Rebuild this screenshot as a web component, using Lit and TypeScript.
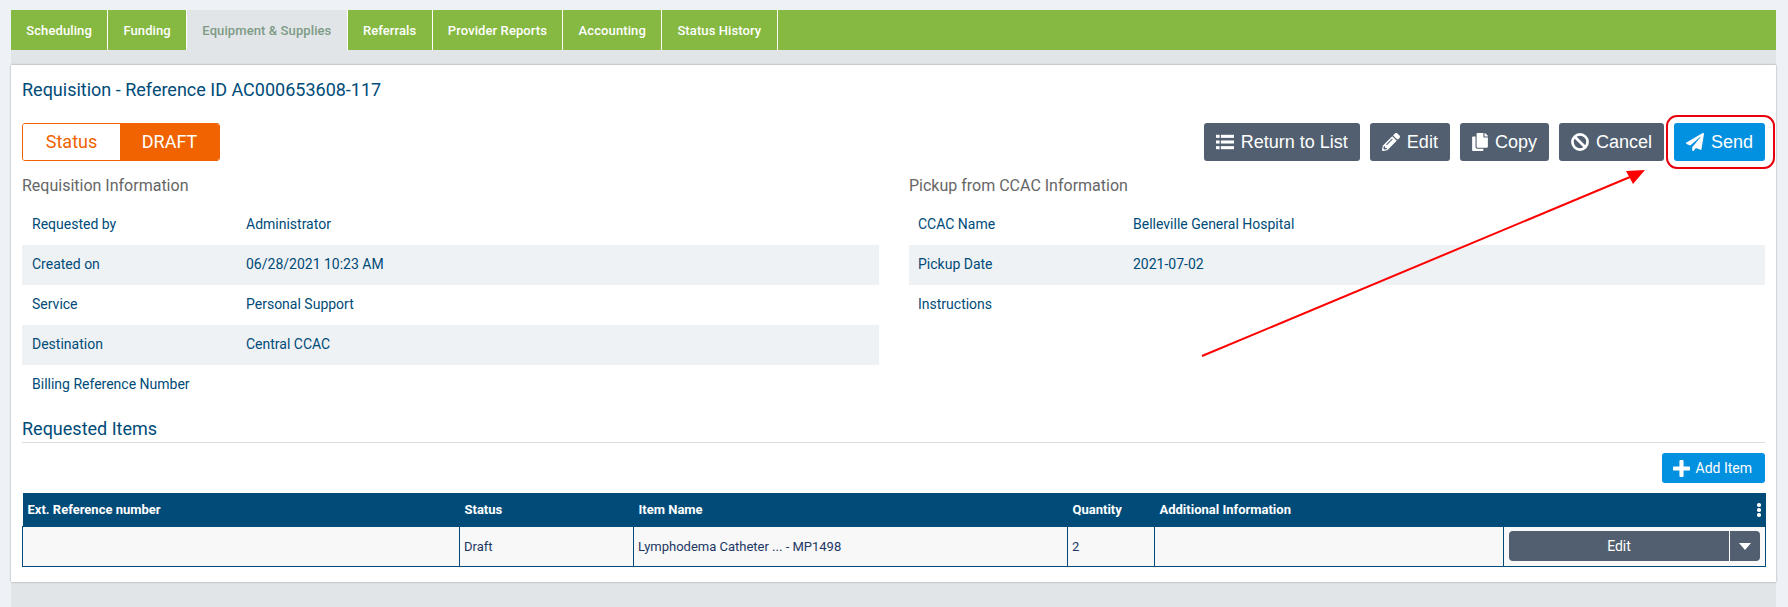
import { LitElement, html, css, svg } from "lit";
import { customElement } from "lit/decorators.js";

const ICONS = {
  list: svg`<svg class="ic" viewBox="0 0 20 18"><rect x="0" y="1" width="4" height="3.4"/><rect x="5.4" y="1" width="14.6" height="3.4"/><rect x="0" y="7.3" width="4" height="3.4"/><rect x="5.4" y="7.3" width="14.6" height="3.4"/><rect x="0" y="13.6" width="4" height="3.4"/><rect x="5.4" y="13.6" width="14.6" height="3.4"/></svg>`,
  pencil: svg`<svg class="ic" viewBox="0 0 512 512"><path d="M497.9 142.1l-46.1 46.1c-4.7 4.7-12.3 4.7-17 0l-111-111c-4.7-4.7-4.7-12.3 0-17l46.1-46.1c18.7-18.7 49.1-18.7 67.9 0l60.1 60.1c18.8 18.7 18.8 49.1 0 67.9zM284.2 99.8L21.6 362.4.4 483.9c-2.9 16.4 11.4 30.6 27.8 27.8l121.5-21.3 262.6-262.6c4.7-4.7 4.7-12.3 0-17l-111-111c-4.8-4.7-12.4-4.7-17.1 0zM124.1 339.9c-5.5-5.5-5.5-14.3 0-19.8l154-154c5.5-5.5 14.3-5.5 19.8 0s5.5 14.3 0 19.8l-154 154c-5.5 5.5-14.3 5.5-19.8 0zM88 424h48v36.3l-64.5 11.3-31.1-31.1L51.7 376H88v48z"/></svg>`,
  copy: svg`<svg class="ic narrow" viewBox="0 0 448 512"><path d="M320 448v40c0 13.255-10.745 24-24 24H24c-13.255 0-24-10.745-24-24V120c0-13.255 10.745-24 24-24h72v296c0 30.879 25.121 56 56 56h168zm0-344V0H152c-13.255 0-24 10.745-24 24v368c0 13.255 10.745 24 24 24h272c13.255 0 24-10.745 24-24V128H344c-13.2 0-24-10.8-24-24zm120.971-31.029L375.029 7.029A24 24 0 0 0 358.059 0H352v96h96v-6.059a24 24 0 0 0-7.029-16.97z"/></svg>`,
  ban: svg`<svg class="ic" viewBox="0 0 20 20"><circle cx="10" cy="10" r="8.4" fill="none" stroke="#fff" stroke-width="3"/><path d="M4.4 4.4 15.6 15.6" stroke="#fff" stroke-width="3"/></svg>`,
  send: svg`<svg class="ic" viewBox="0 0 512 512"><path d="M476 3.2L12.5 270.6c-18.1 10.4-15.8 35.6 2.2 43.2L121 358.4l287.3-253.2c5.5-4.9 13.3 2.6 8.6 8.3L176 407v80.5c0 23.6 28.5 32.9 42.5 15.8L282 426l124.6 52.2c14.2 6 30.4-2.9 33-18.2l72-432C515 7.8 493.3-6.8 476 3.2z"/></svg>`,
  plus: svg`<svg class="ic-plus" viewBox="0 0 18 18"><rect x="6.8" y="0" width="4.4" height="18" rx="1"/><rect x="0" y="6.8" width="18" height="4.4" rx="1"/></svg>`,
};

const TABS = ["Scheduling", "Funding", "Equipment & Supplies", "Referrals", "Provider Reports", "Accounting", "Status History"];
const LEFT: [string, string][] = [
  ["Requested by", "Administrator"],
  ["Created on", "06/28/2021 10:23 AM"],
  ["Service", "Personal Support"],
  ["Destination", "Central CCAC"],
  ["Billing Reference Number", ""],
];
const RIGHT: [string, string][] = [
  ["CCAC Name", "Belleville General Hospital"],
  ["Pickup Date", "2021-07-02"],
  ["Instructions", ""],
];

@customElement("app-root")
export class AppRoot extends LitElement {
  static styles = css`
    :host { display: block; position: relative; background: #eef1f5; height: 607px; overflow: hidden; font-family: Roboto, sans-serif; color: #004b78; }
    .page { margin: 0 12px 0 11px; padding-top: 10px; height: 597px; }
    .inner { background: #e1e5e8; height: 597px; }
    .tabs { display: flex; height: 40px; background: #85b941; }
    .tab { display: flex; align-items: center; padding: 0 15.25px; font-size: 13px; font-weight: 500; letter-spacing: 0.1px; color: #fff; border-right: 1px solid #fff; white-space: nowrap; }
    .tab.active { background: #e1e5e8; color: #7d9b85; }
    .panel { margin-top: 15px; height: 517px; box-sizing: border-box; background: #fff; box-shadow: 0 0 2px rgba(0,0,0,.35); padding: 13px 11px 0 11px; }
    .title { font-size: 18px; line-height: 24px; height: 24px; margin-bottom: 21px; }
    .toolbar { display: flex; justify-content: space-between; height: 38px; }
    .status { display: flex; height: 38px; box-sizing: border-box; font-size: 18px; border: 1px solid #f06300; border-radius: 3px; overflow: hidden; width: 198px; }
    .status span { display: flex; align-items: center; justify-content: center; padding-bottom: 1px; }
    .status .k { color: #f06300; background: #fff; width: 97px; }
    .status .v { color: #fff; background: #f06300; flex: 1; }
    .actions { display: flex; gap: 10px; }
    .btn { display: flex; align-items: center; gap: 7px; height: 38px; box-sizing: border-box; padding: 0 12px 0 12px; background: #515f70; color: #fff; border-radius: 3px; font-family: "Liberation Sans", Arial, sans-serif; font-size: 18px; }
    .btn.blue { background: #0290e0; }
    .ic { width: 18px; height: 18px; fill: #fff; flex: none; }
    .ic.narrow { width: 16px; }
    .ic-plus { width: 17px; height: 17px; fill: #fff; flex: none; }
    .cols { display: grid; grid-template-columns: 857px 856px; column-gap: 30px; margin-top: 15px; height: 241px; }
    h3 { margin: 0 0 9px; font-size: 16px; line-height: 20px; height: 20px; font-weight: 400; color: #666; }
    .row { display: grid; height: 40px; align-items: center; font-size: 14px; padding-bottom: 2px; box-sizing: border-box; }
    .left .row { grid-template-columns: 214px 1fr; padding-left: 10px; }
    .right .row { grid-template-columns: 215px 1fr; padding-left: 9px; }
    .row:nth-of-type(even) { background: #eff2f5; }
    .items { font-size: 18px; line-height: 24px; height: 25px; border-bottom: 1px solid #ddd; font-weight: 400; }
    .add-row { display: flex; justify-content: flex-end; margin: 10px 0; }
    .add { display: flex; align-items: center; gap: 6px; height: 30px; padding: 0 13px 0 11px; box-sizing: border-box; background: #0290e0; color: #fff; border-radius: 3px; font-size: 14px; }
    table { border-collapse: collapse; table-layout: fixed; width: 1743px; font-size: 13px; }
    .c1 { width: 437px; } .c2 { width: 174px; } .c3 { width: 434px; } .c4 { width: 87px; } .c5 { width: 349px; } .c6 { width: 262px; }
    thead tr { background: #004b78; height: 33px; }
    th { text-align: left; color: #fff; font-weight: 700; padding: 0 5px; position: relative; }
    tbody tr { background: #f8f8f8; height: 40px; }
    td { border: 1px solid #004b78; padding: 0 4px; color: #1c3764; }
    td.act { padding: 0 5px; }
    .kebab { display: flex; flex-direction: column; gap: 1.5px; position: absolute; right: 5px; top: 10px; }
    .kebab i { width: 3.5px; height: 3.5px; background: #fff; border-radius: 50%; }
    .split { display: flex; height: 30px; border-radius: 4px; overflow: hidden; background: #515f70; color: #fff; font-size: 14px; }
    .split .main { flex: 1; display: flex; align-items: center; justify-content: center; border-right: 1px solid #fff; }
    .split .caret { width: 30px; display: flex; align-items: center; justify-content: center; }
    .caret b { width: 0; height: 0; border-left: 6px solid transparent; border-right: 6px solid transparent; border-top: 7px solid #fff; }
    .annot { position: absolute; left: 0; top: 0; pointer-events: none; }
  `;

  render() {
    return html`
      <div class="page"><div class="inner">
        <div class="tabs">
          ${TABS.map((t, i) => html`<div class="tab ${i === 2 ? "active" : ""}">${t}</div>`)}
        </div>
        <div class="panel">
          <div class="title">Requisition - Reference ID AC000653608-117</div>
          <div class="toolbar">
            <div class="status"><span class="k">Status</span><span class="v">DRAFT</span></div>
            <div class="actions">
              <div class="btn">${ICONS.list}Return to List</div>
              <div class="btn">${ICONS.pencil}Edit</div>
              <div class="btn">${ICONS.copy}Copy</div>
              <div class="btn">${ICONS.ban}Cancel</div>
              <div class="btn blue">${ICONS.send}Send</div>
            </div>
          </div>
          <div class="cols">
            <div class="left">
              <h3>Requisition Information</h3>
              ${LEFT.map(([k, v]) => html`<div class="row"><span>${k}</span><span>${v}</span></div>`)}
            </div>
            <div class="right">
              <h3>Pickup from CCAC Information</h3>
              ${RIGHT.map(([k, v]) => html`<div class="row"><span>${k}</span><span>${v}</span></div>`)}
            </div>
          </div>
          <div class="items">Requested Items</div>
          <div class="add-row"><div class="add">${ICONS.plus}Add Item</div></div>
          <table>
            <colgroup><col class="c1" /><col class="c2" /><col class="c3" /><col class="c4" /><col class="c5" /><col class="c6" /></colgroup>
            <thead><tr>
              <th>Ext. Reference number</th><th>Status</th><th>Item Name</th><th>Quantity</th><th>Additional Information</th>
              <th><span class="kebab"><i></i><i></i><i></i></span></th>
            </tr></thead>
            <tbody><tr>
              <td></td><td>Draft</td><td>Lymphodema Catheter ... - MP1498</td><td>2</td><td></td>
              <td class="act"><div class="split"><div class="main">Edit</div><div class="caret"><b></b></div></div></td>
            </tr></tbody>
          </table>
        </div>
      </div></div>
      <svg class="annot" width="1788" height="607" viewBox="0 0 1788 607">
        <rect x="1667" y="116" width="107" height="52" rx="10" fill="none" stroke="#e8000d" stroke-width="2"/>
        <path d="M1202 356 L1630 177" stroke="#f00" stroke-width="2" fill="none"/>
        <path d="M1645 170 L1626 171 L1633 184 Z" fill="#f00"/>
      </svg>
    `;
  }
}
